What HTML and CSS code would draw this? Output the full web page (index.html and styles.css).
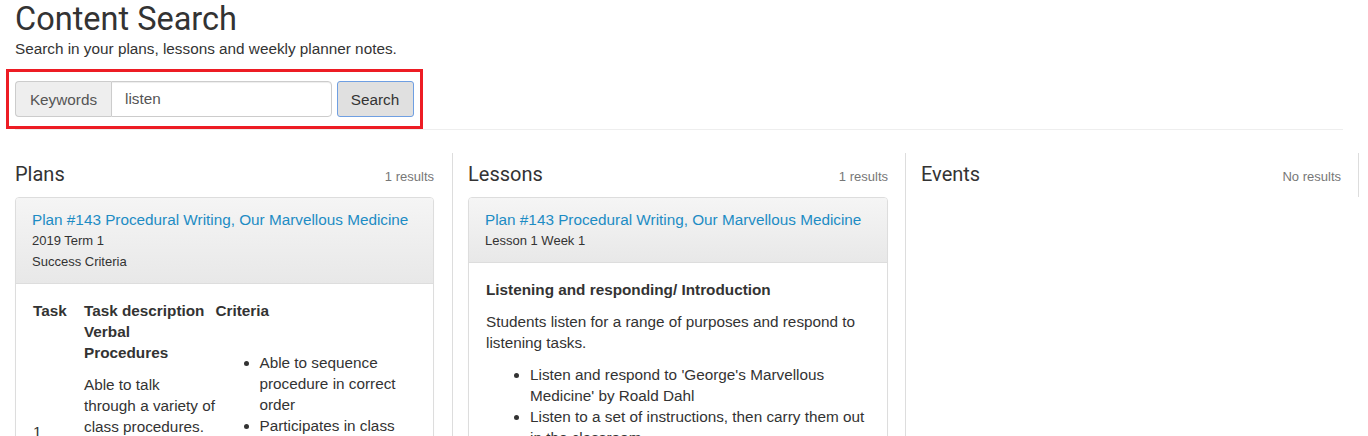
FILE: index.html
```html
<!DOCTYPE html>
<html lang="en">
<head>
<meta charset="utf-8">
<title>Content Search</title>
<link rel="stylesheet" href="styles.css">
</head>
<body>
<div class="page">
  <h1 class="title">Content Search</h1>
  <p class="lead">Search in your plans, lessons and weekly planner notes.</p>

  <div class="highlight">
    <form class="search-form">
      <div class="input-group">
        <span class="addon">Keywords</span>
        <input class="field" type="text" value="listen">
      </div>
      <button class="btn" type="button">Search</button>
    </form>
  </div>
  <div class="rule"></div>

  <div class="results">
    <section class="col">
      <header class="col-head">
        <h2 class="col-title">Plans</h2>
        <span class="count">1 results</span>
      </header>
      <article class="card">
        <div class="card-head">
          <a class="card-link" href="#">Plan #143 Procedural Writing, Our Marvellous Medicine</a>
          <div class="meta">2019 Term 1</div>
          <div class="meta">Success Criteria</div>
        </div>
        <div class="card-body">
          <table class="criteria-table">
            <colgroup>
              <col class="c-task">
              <col class="c-desc">
              <col>
            </colgroup>
            <thead>
              <tr><th>Task</th><th>Task description</th><th>Criteria</th></tr>
            </thead>
            <tbody>
              <tr>
                <td>1</td>
                <td>
                  <strong class="desc-title">Verbal Procedures</strong>
                  <p class="desc-text">Able to talk through a variety of class procedures. Use time connectives to explain each step of a game or recipe in order.</p>
                </td>
                <td>
                  <ul class="crit-list">
                    <li>Able to sequence procedure in correct order</li>
                    <li>Participates in class discussions</li>
                    <li>Gives clear oral instructions</li>
                  </ul>
                </td>
              </tr>
            </tbody>
          </table>
        </div>
      </article>
    </section>

    <section class="col">
      <header class="col-head">
        <h2 class="col-title">Lessons</h2>
        <span class="count">1 results</span>
      </header>
      <article class="card">
        <div class="card-head">
          <a class="card-link" href="#">Plan #143 Procedural Writing, Our Marvellous Medicine</a>
          <div class="meta">Lesson 1 Week 1</div>
        </div>
        <div class="card-body">
          <p class="lesson-title">Listening and responding/ Introduction</p>
          <p class="text">Students listen for a range of purposes and respond to listening tasks.</p>
          <ul class="list">
            <li>Listen and respond to 'George's Marvellous Medicine' by Roald Dahl</li>
            <li>Listen to a set of instructions, then carry them out in the classroom.</li>
          </ul>
        </div>
      </article>
    </section>

    <section class="col">
      <header class="col-head">
        <h2 class="col-title">Events</h2>
        <span class="count">No results</span>
      </header>
    </section>
  </div>
</div>
</body>
</html>
```

FILE: styles.css
```css
html, body {
  margin: 0;
  background: #fff;
}

body {
  font-family: "Liberation Sans", Arial, sans-serif;
  font-size: 15.3px;
  line-height: 21px;
  color: #333;
}

.page {
  padding: 0 25px 0 15px;
}

.title {
  margin: 2px 0 0;
  font-family: Roboto, "Liberation Sans", sans-serif;
  font-weight: 400;
  font-size: 32.5px;
  line-height: 35.5px;
  color: #333;
}

.lead {
  margin: 0;
}

.highlight {
  display: inline-block;
  margin: 10.5px 0 0 -9px;
  padding: 9px 6.5px 9px 6px;
  border: 3px solid #ed1c24;
}

.search-form {
  display: flex;
  align-items: stretch;
  gap: 4.5px;
  height: 36px;
}

.input-group {
  display: flex;
  height: 36px;
}

.addon {
  box-sizing: border-box;
  display: flex;
  align-items: center;
  justify-content: center;
  width: 96px;
  padding: 0;
  background: #eee;
  color: #555;
  border: 1px solid #ccc;
  border-right: 0;
  border-radius: 4px 0 0 4px;
}

.field {
  box-sizing: border-box;
  width: 221px;
  height: 36px;
  margin: 0;
  padding: 0 13px;
  border: 1px solid #ccc;
  border-radius: 0 4px 4px 0;
  box-shadow: inset 0 1px 1px rgba(0, 0, 0, .075);
  font: inherit;
  color: #555;
  outline: none;
}

.btn {
  box-sizing: border-box;
  width: 77px;
  height: 36px;
  margin: 0;
  padding: 0;
  background: #e0e0e0;
  border: 1px solid #6f9fe2;
  border-radius: 3px;
  font: inherit;
  color: #333;
}

.rule {
  border-top: 1px solid #eee;
}

.results {
  display: grid;
  grid-template-columns: 453px 453px 453px;
  align-items: start;
  margin: 23px 0 0 -15px;
}

.col {
  padding: 10px 17px 0 15px;
  border-right: 1px solid #ddd;
}

.col:first-child {
  padding-right: 18px;
}

.col-head {
  display: flex;
  justify-content: space-between;
  align-items: baseline;
  margin-bottom: 10px;
}

.col-title {
  margin: 0;
  font-family: Roboto, "Liberation Sans", sans-serif;
  font-weight: 400;
  font-size: 20px;
  line-height: 22px;
  color: #333;
}

.count {
  font-size: 13px;
  color: #777;
}

.card {
  border: 1px solid #ddd;
  border-radius: 4px;
  box-shadow: 0 1px 1px rgba(0, 0, 0, .05);
  background: #fff;
}

.card-head {
  padding: 11px 17px 11px 16px;
  background: linear-gradient(#f5f5f5, #e8e8e8);
  border-bottom: 1px solid #ddd;
  border-radius: 3px 3px 0 0;
}

.card-link {
  display: block;
  font-size: 15.3px;
  color: #1d8cc4;
  text-decoration: none;
  white-space: nowrap;
}

.meta {
  font-size: 13px;
}

.card-body {
  padding: 16px 17px;
}

.lesson-title {
  margin: 0 0 11px;
  font-weight: bold;
}

.text {
  margin: 0 0 11px;
}

.list {
  margin: 0 0 11px;
  padding-left: 44px;
}

.criteria-table {
  width: 100%;
  border-collapse: collapse;
  table-layout: fixed;
}

.c-task {
  width: 51px;
}

.c-desc {
  width: 131.5px;
}

.criteria-table th {
  padding: 0;
  text-align: left;
  font-weight: bold;
  vertical-align: bottom;
}

.criteria-table td {
  padding: 0;
  vertical-align: middle;
}

.desc-title {
  display: block;
  font-weight: bold;
}

.desc-text {
  margin: 11px 0 0;
}

.crit-list {
  margin: 0 0 13px;
  padding-left: 44px;
}
```
